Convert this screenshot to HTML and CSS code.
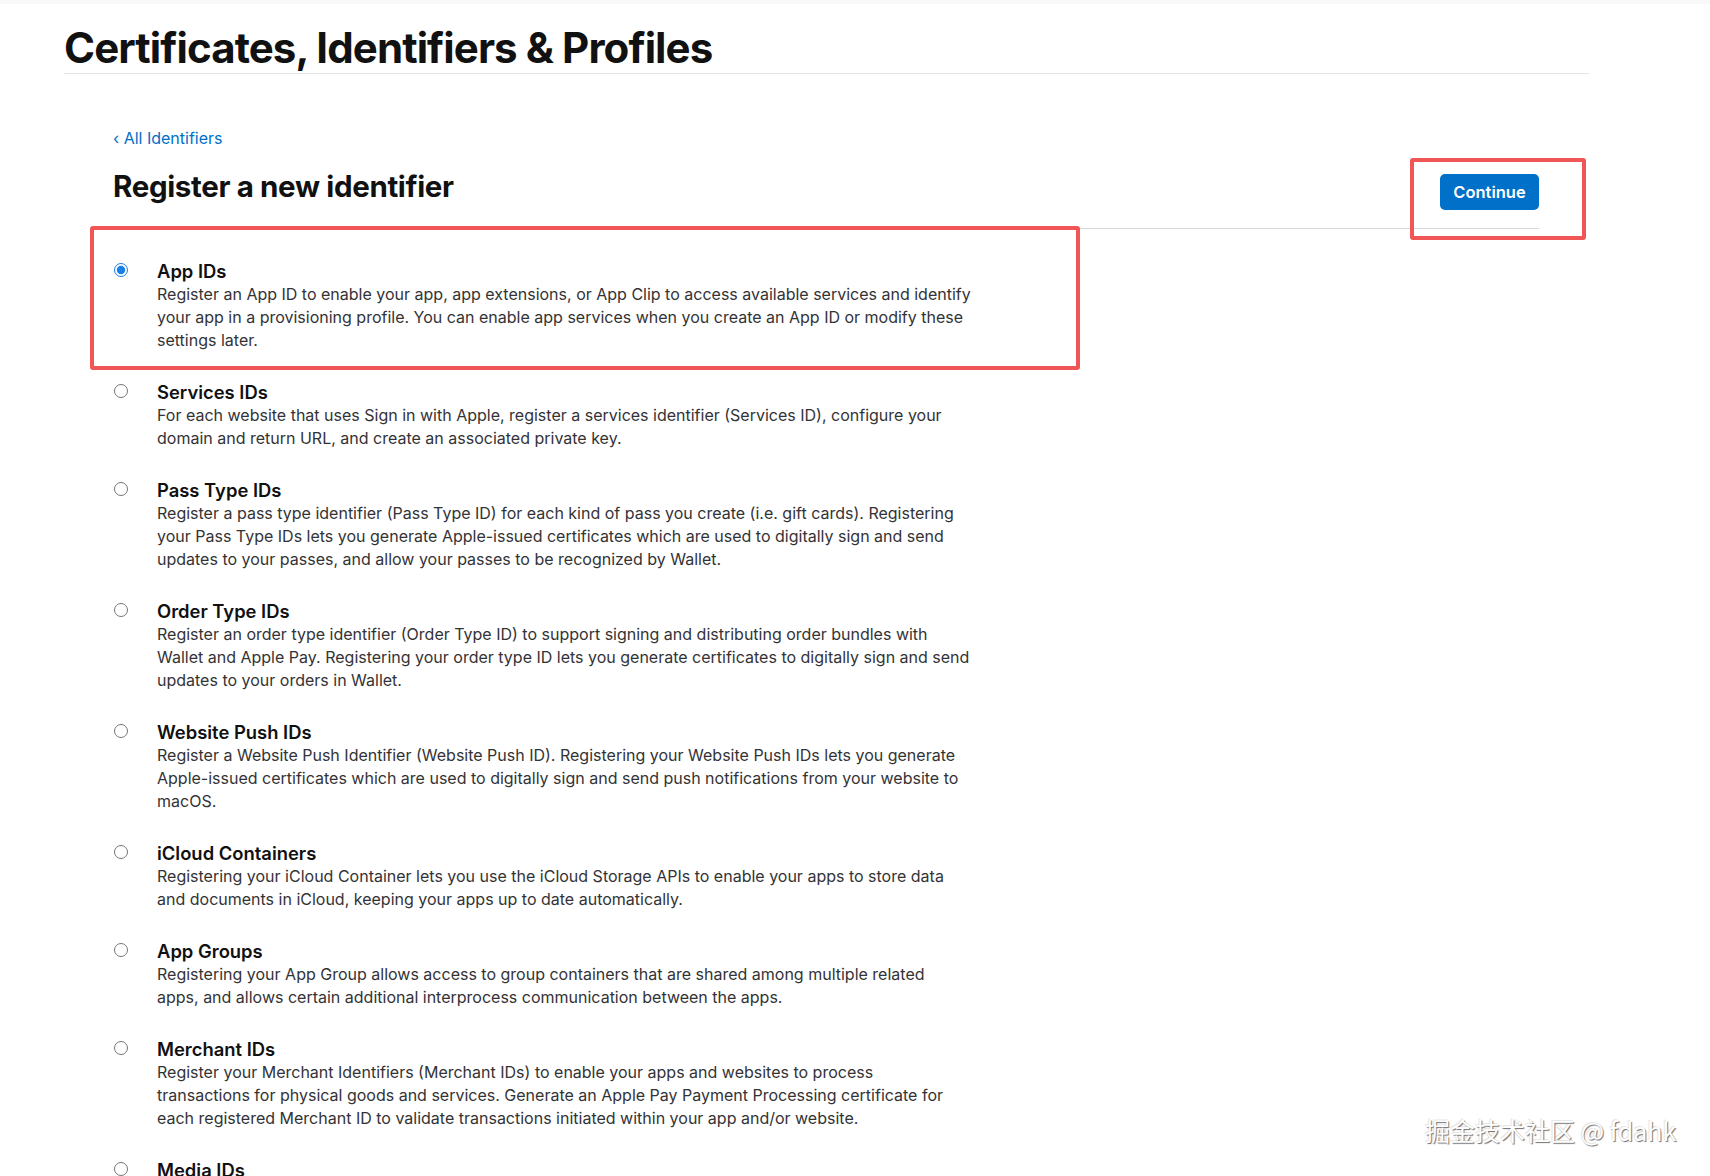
FILE: index.html
```html
<!DOCTYPE html>
<html lang="en">
<head>
<meta charset="utf-8">
<title>Certificates, Identifiers &amp; Profiles</title>
<link rel="stylesheet" href="styles.css">
</head>
<body>
<div class="topbar"></div>
<header class="page-header">
  <h1 class="page-title">Certificates, Identifiers &amp; Profiles</h1>
</header>
<main class="content">
  <a class="back-link" href="#">&#8249; All Identifiers</a>
  <div class="head-row">
    <h2 class="section-title">Register a new identifier</h2>
    <button class="btn-continue" type="button">Continue</button>
  </div>
  <ul class="id-list">
    <li class="id-item">
      <input class="radio" type="radio" name="idtype" checked>
      <div class="id-text">
        <div class="id-title">App IDs</div>
        <p class="id-desc">Register an App ID to enable your app, app extensions, or App Clip to access available services and identify your app in a provisioning profile. You can enable app services when you create an App ID or modify these settings later.</p>
      </div>
    </li>
    <li class="id-item">
      <input class="radio" type="radio" name="idtype">
      <div class="id-text">
        <div class="id-title">Services IDs</div>
        <p class="id-desc">For each website that uses Sign in with Apple, register a services identifier (Services ID), configure your domain and return URL, and create an associated private key.</p>
      </div>
    </li>
    <li class="id-item">
      <input class="radio" type="radio" name="idtype">
      <div class="id-text">
        <div class="id-title">Pass Type IDs</div>
        <p class="id-desc">Register a pass type identifier (Pass Type ID) for each kind of pass you create (i.e. gift cards). Registering your Pass Type IDs lets you generate Apple-issued certificates which are used to digitally sign and send updates to your passes, and allow your passes to be recognized by Wallet.</p>
      </div>
    </li>
    <li class="id-item">
      <input class="radio" type="radio" name="idtype">
      <div class="id-text">
        <div class="id-title">Order Type IDs</div>
        <p class="id-desc">Register an order type identifier (Order Type ID) to support signing and distributing order bundles with Wallet and Apple Pay. Registering your order type ID lets you generate certificates to digitally sign and send updates to your orders in Wallet.</p>
      </div>
    </li>
    <li class="id-item">
      <input class="radio" type="radio" name="idtype">
      <div class="id-text">
        <div class="id-title">Website Push IDs</div>
        <p class="id-desc">Register a Website Push Identifier (Website Push ID). Registering your Website Push IDs lets you generate Apple-issued certificates which are used to digitally sign and send push notifications from your website to macOS.</p>
      </div>
    </li>
    <li class="id-item">
      <input class="radio" type="radio" name="idtype">
      <div class="id-text">
        <div class="id-title">iCloud Containers</div>
        <p class="id-desc">Registering your iCloud Container lets you use the iCloud Storage APIs to enable your apps to store data and documents in iCloud, keeping your apps up to date automatically.</p>
      </div>
    </li>
    <li class="id-item">
      <input class="radio" type="radio" name="idtype">
      <div class="id-text">
        <div class="id-title">App Groups</div>
        <p class="id-desc">Registering your App Group allows access to group containers that are shared among multiple related<br>apps, and allows certain additional interprocess communication between the apps.</p>
      </div>
    </li>
    <li class="id-item">
      <input class="radio" type="radio" name="idtype">
      <div class="id-text">
        <div class="id-title">Merchant IDs</div>
        <p class="id-desc">Register your Merchant Identifiers (Merchant IDs) to enable your apps and websites to process<br>transactions for physical goods and services. Generate an Apple Pay Payment Processing certificate for each registered Merchant ID to validate transactions initiated within your app and/or website.</p>
      </div>
    </li>
    <li class="id-item">
      <input class="radio" type="radio" name="idtype">
      <div class="id-text">
        <div class="id-title">Media IDs</div>
      </div>
    </li>
  </ul>
</main>
<div class="annot annot-list"></div>
<div class="annot annot-button"></div>
<div class="watermark">掘金技术社区 @ fdahk</div>
</body>
</html>
```

FILE: styles.css
```css
* { box-sizing: border-box; }

html, body {
  margin: 0;
  padding: 0;
  background: #ffffff;
}

body {
  font-family: Inter, "Liberation Sans", Arial, sans-serif;
  color: #1d1d1f;
  position: relative;
  min-height: 1176px;
  overflow: hidden;
}

.topbar {
  height: 4px;
  background: #f8f8f8;
}

.page-header {
  margin-left: 64px;
  width: 1525px;
  border-bottom: 1px solid #e3e3e6;
  padding-top: 19px;
}

.page-title {
  margin: 0;
  font-size: 42px;
  line-height: 50px;
  font-weight: 700;
  letter-spacing: -0.9px;
  color: #111111;
}

.content {
  margin-left: 113px;
  width: 1426px;
  padding-top: 53px;
}

.back-link {
  display: block;
  font-size: 16px;
  line-height: 23px;
  color: #0070c9;
  text-decoration: none;
}

.head-row {
  display: flex;
  justify-content: space-between;
  align-items: flex-start;
  border-bottom: 1px solid #d9d9dc;
  padding-bottom: 18px;
}

.section-title {
  margin: 18px 0 0 0;
  font-size: 29.5px;
  line-height: 36px;
  font-weight: 700;
  letter-spacing: -0.35px;
  color: #111111;
}

.btn-continue {
  margin-top: 24px;
  width: 99px;
  height: 36px;
  border: 0;
  border-radius: 5px;
  background: #0070c9;
  color: #ffffff;
  font-family: Inter, "Liberation Sans", Arial, sans-serif;
  font-size: 16.5px;
  font-weight: 600;
  padding: 0;
}

.id-list {
  list-style: none;
  margin: 0;
  padding: 31px 0 0 0;
}

.id-item {
  display: flex;
  align-items: flex-start;
  margin-bottom: 29px;
}

.radio {
  margin: 3px 29px 0 1px;
  width: 14px;
  height: 14px;
  flex: none;
  accent-color: #1a7fe8;
}

.id-text {
  max-width: 815px;
}

.id-title {
  font-size: 18.4px;
  line-height: 23px;
  font-weight: 600;
  color: #111111;
}

.id-desc {
  margin: 0;
  font-size: 16px;
  line-height: 23px;
  color: #333336;
}

.annot {
  position: absolute;
  border: 4px solid #f05656;
  border-radius: 3px;
  pointer-events: none;
}

.annot-list {
  left: 90px;
  top: 226px;
  width: 990px;
  height: 144px;
}

.annot-button {
  left: 1410px;
  top: 158px;
  width: 176px;
  height: 82px;
}

.watermark {
  position: absolute;
  left: 1425px;
  top: 1113px;
  font-family: "Noto Sans CJK SC", "Liberation Sans", sans-serif;
  font-size: 25px;
  line-height: 34px;
  color: #ffffff;
  text-shadow: 1px 1px 1px #6f6f6f, -1px -1px 0 #e6e6e6;
  white-space: nowrap;
}
```
